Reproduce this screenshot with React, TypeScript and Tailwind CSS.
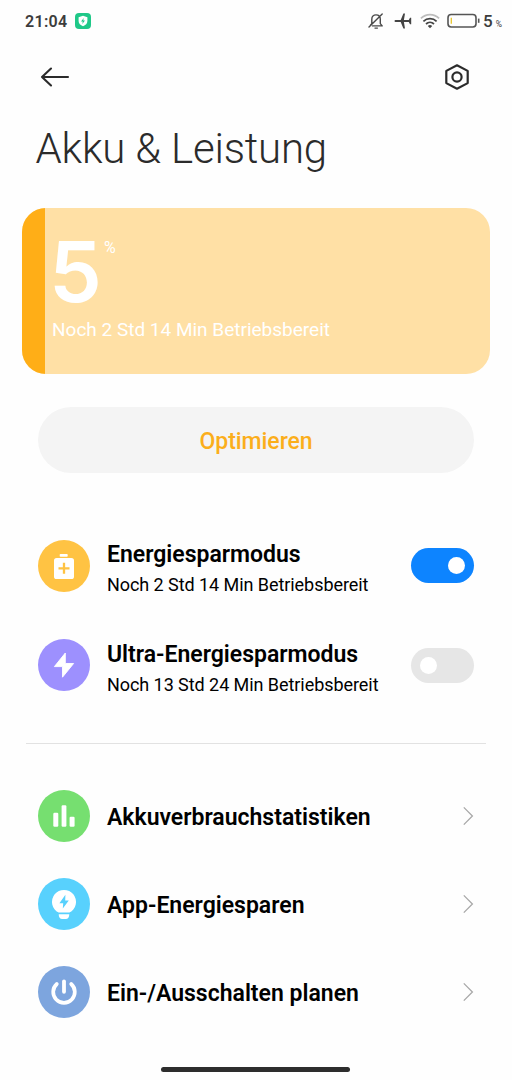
import type { ReactNode } from "react";
import clsx from "clsx";

export default function App() {
  return (
    <div className="h-[1080px] w-[512px] overflow-hidden bg-[#fefefe] font-['Roboto',sans-serif] whitespace-nowrap text-black">
      <StatusBar />

      <header className="flex h-[70px] items-center justify-between pr-[42px] pl-10">
        <button aria-label="Zurück">
          <svg width="30" height="22" viewBox="0 0 30 22" fill="none" stroke="#2b2b2b" strokeWidth="2.1" strokeLinecap="round" strokeLinejoin="round">
            <path d="M28 11H2M11 2.5L2 11L11 19.5" />
          </svg>
        </button>
        <button aria-label="Einstellungen">
          <svg width="26" height="26" viewBox="0 0 26 26" fill="none" stroke="#2b2b2b" strokeWidth="2.2" strokeLinejoin="round">
            <path d="M13 1.3L23.7 6.9V19.1L13 24.7L2.3 19.1V6.9Z" />
            <circle cx="13" cy="13" r="4.6" />
          </svg>
        </button>
      </header>

      <h1 className="mt-3 ml-[35.5px] h-12 text-[42px] leading-[49px] font-light tracking-[-0.2px] text-[#2b2b2b]">
        Akku &amp; Leistung
      </h1>

      <BatteryCard percent={5} />

      <button className="mt-[33px] ml-[38px] flex h-[66px] w-[436px] items-center justify-center rounded-full bg-[#f4f4f4] pt-1 text-[23px] font-medium tracking-[-0.05px] text-[#fbae1b]">
        Optimieren
      </button>

      <section className="mt-[66.5px] flex flex-col gap-[47.5px] pr-[38px] pl-[38px]">
        <ModeRow title="Energiesparmodus" detail="Noch 2 Std 14 Min Betriebsbereit" color="bg-[#ffc343]" on>
          <rect x="21.7" y="14" width="8" height="2.7" rx="0.8" />
          <rect x="16" y="18" width="20" height="21" rx="2.6" />
          <path d="M26 22.8V33.8M20.5 28.3H31.5" stroke="#ffc343" strokeWidth="2.3" />
        </ModeRow>
        <ModeRow title="Ultra-Energiesparmodus" detail="Noch 13 Std 24 Min Betriebsbereit" color="bg-[#9d90fe]">
          <path d="M27.3 14L16.4 27.6H24.5V38.2L35.6 24.5H27.3Z" stroke="#fff" strokeWidth="0.9" strokeLinejoin="round" />
        </ModeRow>
      </section>

      <hr className="mx-[26px] mt-[52px] border-[#e2e2e2]" />

      <nav className="mt-[46px] flex flex-col gap-9 pr-[38px] pl-[38px]">
        <LinkRow title="Akkuverbrauchstatistiken" color="bg-[#76df70]">
          <rect x="15.3" y="22.7" width="5" height="14" rx="1.2" />
          <rect x="23.6" y="15.3" width="4.8" height="21.4" rx="1.2" />
          <rect x="31.6" y="26.7" width="5" height="10" rx="1.2" />
        </LinkRow>
        <LinkRow title="App-Energiesparen" color="bg-[#58d1fd]">
          <path d="M20.6 34.6A12 12 0 1 1 31.4 34.6Z" />
          <path d="M20.7 36.2H31.3C31.3 39 30 41 27.8 41H24.2C22 41 20.7 39 20.7 36.2Z" />
          <path d="M27.4 16.8L21.4 25.2H25.2L24.8 30.6L30.8 22.4H27.2Z" fill="#58d1fd" />
        </LinkRow>
        <LinkRow title="Ein-/Ausschalten planen" color="bg-[#7da5de]">
          <path d="M18.8 18A10.8 10.8 0 1 0 33.2 18" fill="none" stroke="#fff" strokeWidth="3.7" strokeLinecap="round" />
          <path d="M26 15.3V25.8" stroke="#fff" strokeWidth="3.8" strokeLinecap="round" />
        </LinkRow>
      </nav>

      <div className="mt-[49px] ml-[161px] h-[5px] w-[189px] rounded-full bg-[#2d2d2d]" />
    </div>
  );
}

function StatusBar() {
  return (
    <div className="flex h-[42px] items-center pr-[9px] pl-[25px] text-[#3c3c3c]">
      <span className="pt-0.5 text-base font-semibold tracking-[0.3px]">21:04</span>
      <span className="ml-2 flex h-4 w-4 items-center justify-center rounded-[4px] bg-[#1fc888]">
        <svg width="10" height="12" viewBox="0 0 10 12">
          <path d="M5 0.8L9.4 2.3V6C9.4 8.4 7.6 10.2 5 11.3C2.4 10.2 0.6 8.4 0.6 6V2.3Z" fill="#fff" />
          <path d="M5.8 3L3 6.4H4.8L4.3 9L7 5.5H5.2Z" fill="#1fc888" />
        </svg>
      </span>

      <svg className="ml-auto" width="18" height="18" viewBox="0 0 18 18" fill="none" stroke="#4a4a4a" strokeWidth="1.4" strokeLinecap="round" strokeLinejoin="round">
        <path d="M3.4 13.2L4.8 11.6V7.2C4.8 4.6 6.6 2.9 9 2.9S13.3 4.6 13.3 7.2V11.6L15.2 13.9H5.5M8 16.1H10.4M2 15L15.2 2" />
      </svg>
      <svg className="ml-[9px]" width="18" height="16" viewBox="0 0 18 16" fill="#444">
        <path d="M0.5 8C0.5 7.3 1.2 7 2 7H6.7L9.4 0.6H11L9.9 7H14.8L16 4.8H17.2V11.2H16L14.8 9H9.9L11 15.4H9.4L6.7 9H2C1.2 9 0.5 8.7 0.5 8Z" />
      </svg>
      <svg className="ml-2" width="20" height="16" viewBox="0 0 20 16" fill="none" strokeWidth="1.7" strokeLinecap="butt">
        <path d="M0.9 5.4C6 0.4 14 0.4 19.1 5.4" stroke="#bdbdbd" />
        <path d="M3.4 8.3C7.1 4.7 12.9 4.7 16.6 8.3" stroke="#444" />
        <path d="M6 11C8.3 8.9 11.7 8.9 14 11" stroke="#444" />
        <path d="M7.8 12.9Q10 11 12.2 12.9L10 15.2Z" fill="#444" />
      </svg>
      <svg className="ml-[7px]" width="33" height="16" viewBox="0 0 33 16" fill="none">
        <rect x="1" y="1.5" width="28" height="12.5" rx="3.2" stroke="#555" strokeWidth="1.6" />
        <path d="M4.3 4.7V10.7" stroke="#e8c62c" strokeWidth="1.3" />
        <path d="M31.7 5.6V9.8" stroke="#555" strokeWidth="1.6" />
      </svg>
      <span className="ml-[3px] pt-px text-[17px] font-medium">5</span>
      <span className="mr-px ml-[3px] pt-1.5 text-[8.5px]">%</span>
    </div>
  );
}

function BatteryCard({ percent }: { percent: number }) {
  return (
    <section className="relative mt-9 ml-[22px] h-[166px] w-[468px] overflow-hidden rounded-[24px] bg-[#ffe0a5] text-white">
      <div className="absolute inset-y-0 left-0 bg-[#ffae17]" style={{ width: `${percent}%` }} />
      <div className="relative pl-[30px]">
        <div className="flex h-[106px] pt-[14px]">
          <span className="-ml-[3px] w-[50px] font-['Inter',sans-serif] text-[84px] leading-[100px] font-semibold">{percent}</span>
          <span className="mt-4 ml-[5px] text-base leading-5">%</span>
        </div>
        <p className="mt-1 text-[19px] leading-6">Noch 2 Std 14 Min Betriebsbereit</p>
      </div>
    </section>
  );
}

function RowIcon({ color, children }: { color: string; children: ReactNode }) {
  return (
    <span className={clsx("h-[52px] w-[52px] shrink-0 rounded-full", color)}>
      <svg width="52" height="52" viewBox="0 0 52 52" fill="#fff">
        {children}
      </svg>
    </span>
  );
}

type RowProps = { title: string; color: string; children: ReactNode };

function ModeRow({ title, detail, color, on = false, children }: RowProps & { detail: string; on?: boolean }) {
  return (
    <div className="flex h-[52px] items-center">
      <RowIcon color={color}>{children}</RowIcon>
      <div className="ml-[17px] flex-1 pt-[9px]">
        <p className="text-[23px] leading-[30px] font-semibold">{title}</p>
        <p className="text-[18px] leading-[30px] tracking-[-0.06px]">{detail}</p>
      </div>
      <button
        role="switch"
        aria-checked={on}
        aria-label={title}
        className={clsx("flex h-[35px] w-[63px] items-center rounded-full px-[9px]", on ? "justify-end bg-[#0d84ff]" : "bg-[#e6e6e6]")}
      >
        <span className="h-[17px] w-[17px] rounded-full bg-white" />
      </button>
    </div>
  );
}

function LinkRow({ title, color, children }: RowProps) {
  return (
    <div className="flex h-[52px] items-center">
      <RowIcon color={color}>{children}</RowIcon>
      <p className="ml-[17px] flex-1 pt-1 text-[23px] leading-[30px] font-semibold">{title}</p>
      <svg width="12" height="20" viewBox="0 0 12 20" fill="none" stroke="#a8a8a8" strokeWidth="1.3">
        <path d="M1.8 1.4L10.4 10L1.8 18.6" />
      </svg>
    </div>
  );
}
